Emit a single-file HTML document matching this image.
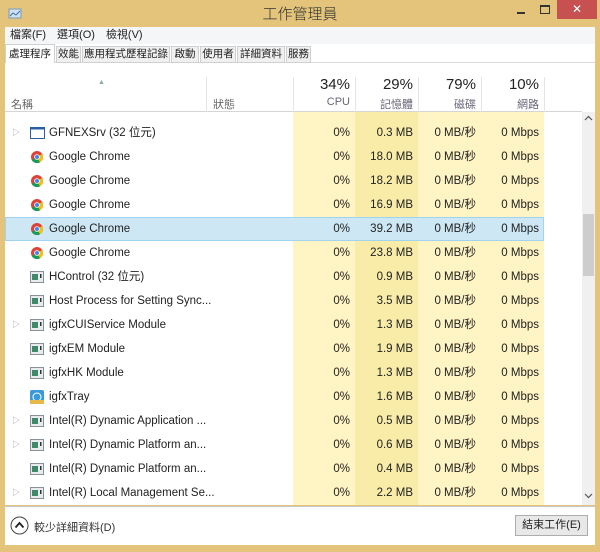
<!DOCTYPE html>
<html><head><meta charset="utf-8"><style>
*{margin:0;padding:0;box-sizing:border-box}
body{width:600px;height:552px;background:#e3c47a;font-family:"Liberation Sans","Noto Sans CJK TC",sans-serif;font-size:11.5px;color:#222;position:relative;overflow:hidden}
.abs{position:absolute}
.title{left:0;top:3px;width:600px;text-align:center;font-size:15px;color:#333;font-family:"Noto Sans CJK TC",sans-serif;font-weight:300}
.menu{left:5px;top:27px;width:590px;height:17px;background:#f5f6f7;font-size:11px}
.menu span{margin-left:5px;margin-right:6px;line-height:16px}
.tabs{left:5px;top:44px;width:590px;height:19px;background:#fff;border-bottom:1px solid #d9d9d9}
.tab{position:absolute;top:2px;height:17px;background:#f0f0f0;border:1px solid #d0d0d0;font-size:10.5px;line-height:15px;text-align:center;color:#222;white-space:nowrap;overflow:hidden}
.content{left:5px;top:63px;width:590px;height:442px;background:#fff}
.col{position:absolute;top:112px;height:393px}
.hdr{position:absolute;top:63px;height:49px;border-bottom:1px solid #d5d5d5}
.row{position:absolute;left:5px;width:577px;height:24px;line-height:24px}
.row span{position:absolute;white-space:nowrap}
.r{text-align:right}
.footer{left:5px;top:506px;width:590px;height:39px;background:#fff;border-top:1px solid #c8c8c8}
</style></head><body>
<svg class="abs" style="left:8px;top:8px" width="14" height="12"><rect x="1" y="1" width="12" height="9" fill="#cfe0ef" stroke="#7a9abf"/><polyline points="2,8 5,5 8,7 12,3" fill="none" stroke="#3a6fb0"/></svg>
<div class="abs title">工作管理員</div>
<div class="abs" style="left:517px;top:12px;width:8px;height:2px;background:#333"></div>
<div class="abs" style="left:540px;top:5px;width:10px;height:9px;border:1.5px solid #333;border-top-width:2px"></div>
<div class="abs" style="left:557px;top:0;width:40px;height:19px;background:#c75050;color:#fff;text-align:center;font-size:12px;line-height:18px">✕</div>
<div class="abs menu"><span>檔案(F)</span><span>選項(O)</span><span>檢視(V)</span></div>
<div class="abs tabs">
<div class="tab" style="left:0;width:50px;background:#fff;border-bottom:none;top:0;height:20px;line-height:18px">處理程序</div>
<div class="tab" style="left:51px;width:25px">效能</div>
<div class="tab" style="left:77px;width:88px">應用程式歷程記錄</div>
<div class="tab" style="left:166px;width:28px">啟動</div>
<div class="tab" style="left:195px;width:36px">使用者</div>
<div class="tab" style="left:232px;width:48px">詳細資料</div>
<div class="tab" style="left:281px;width:25px">服務</div>
</div>
<div class="abs content"></div>
<div class="hdr" style="left:5px;width:577px"></div>
<div class="abs" style="left:98px;top:79px;font-size:7px;color:#8aa">▲</div>
<div class="abs" style="left:11px;top:96px;color:#666;font-size:11px">名稱</div>
<div class="abs" style="left:206px;top:77px;width:1px;height:35px;background:#e5e5e5"></div>
<div class="abs" style="left:213px;top:96px;color:#666;font-size:11px">狀態</div>
<div class="abs" style="left:293px;top:77px;width:1px;height:35px;background:#e5e5e5"></div>
<div class="abs" style="left:355px;top:77px;width:1px;height:35px;background:#e5e5e5"></div>
<div class="abs" style="left:418px;top:77px;width:1px;height:35px;background:#e5e5e5"></div>
<div class="abs" style="left:481px;top:77px;width:1px;height:35px;background:#e5e5e5"></div>
<div class="abs" style="left:544px;top:77px;width:1px;height:35px;background:#e5e5e5"></div>
<div class="abs r" style="left:293px;width:57px;top:76px;font-size:15px">34%</div>
<div class="abs r" style="left:355px;width:58px;top:76px;font-size:15px">29%</div>
<div class="abs r" style="left:418px;width:58px;top:76px;font-size:15px">79%</div>
<div class="abs r" style="left:481px;width:58px;top:76px;font-size:15px">10%</div>
<div class="abs r" style="left:293px;width:57px;top:96px;font-size:11px;color:#667">CPU</div>
<div class="abs r" style="left:355px;width:58px;top:96px;font-size:11px;color:#667">記憶體</div>
<div class="abs r" style="left:418px;width:58px;top:96px;font-size:11px;color:#667">磁碟</div>
<div class="abs r" style="left:481px;width:58px;top:96px;font-size:11px;color:#667">網路</div>
<div class="col" style="left:293px;width:62px;background:#fff4c4"></div>
<div class="col" style="left:355px;width:63px;background:#f9eca8"></div>
<div class="col" style="left:418px;width:126px;background:#fff4c4"></div>
<div class="abs" style="left:582px;top:112px;width:13px;height:393px;background:#f0f0f0"></div>
<div class="abs" style="left:583px;top:214px;width:11px;height:62px;background:#cdcdcd"></div>
<svg class="abs" style="left:584px;top:115px" width="9" height="6"><polyline points="1,5 4.5,1.5 8,5" fill="none" stroke="#555" stroke-width="1.2"/></svg>
<svg class="abs" style="left:584px;top:493px" width="9" height="6"><polyline points="1,1 4.5,4.5 8,1" fill="none" stroke="#555" stroke-width="1.2"/></svg>
<div class="abs" style="left:5px;top:217px;width:539px;height:24px;background:#cde8f4;border:1px solid #9fd3ef"></div>
<div id="rows"></div>
<div class="abs footer"></div>
<svg class="abs" style="left:10px;top:516px" width="19" height="19"><circle cx="9.5" cy="9.5" r="8.5" fill="#fff" stroke="#444"/><polyline points="5.5,11.5 9.5,7 13.5,11.5" fill="none" stroke="#222" stroke-width="1.8"/></svg>
<div class="abs" style="left:34px;top:519px;font-size:11px;color:#333">較少詳細資料(D)</div>
<div class="abs" style="left:515px;top:515px;width:73px;height:21px;background:#e8e8e8;border:1px solid #adadad;font-size:11px;text-align:center;line-height:19px">結束工作(E)</div>
<script>
var d=[["GFNEXSrv (32 位元)","w",1,"0.3"],["Google Chrome","c",0,"18.0"],["Google Chrome","c",0,"18.2"],["Google Chrome","c",0,"16.9"],["Google Chrome","c",0,"39.2"],["Google Chrome","c",0,"23.8"],["HControl (32 位元)","s",0,"0.9"],["Host Process for Setting Sync...","s",0,"3.5"],["igfxCUIService Module","s",1,"1.3"],["igfxEM Module","s",0,"1.9"],["igfxHK Module","s",0,"1.3"],["igfxTray","t",0,"1.6"],["Intel(R) Dynamic Application ...","s",1,"0.5"],["Intel(R) Dynamic Platform an...","s",1,"0.6"],["Intel(R) Dynamic Platform an...","s",0,"0.4"],["Intel(R) Local Management Se...","s",1,"2.2"]];
var h="";
d.forEach(function(r,i){var y=121+i*24;
var ic="";
if(r[1]=="c")ic='<svg style="position:absolute;left:26px;top:6px" width="12" height="12" viewBox="0 0 12 12"><circle cx="6" cy="6" r="6" fill="#db4437"/><path d="M6 6 L0.8 9 A6 6 0 0 0 9 11.2Z" fill="#0f9d58"/><path d="M6 6 L9 11.2 A6 6 0 0 0 11.2 3Z" fill="#f4c20d"/><circle cx="6" cy="6" r="2.8" fill="#fff"/><circle cx="6" cy="6" r="2" fill="#4285f4"/></svg>';
else if(r[1]=="w")ic='<svg style="position:absolute;left:25px;top:6px" width="15" height="12"><rect x="0.5" y="0.5" width="14" height="11" fill="#fff" stroke="#2a5fa8"/><rect x="0.5" y="0.5" width="14" height="2" fill="#2a5fa8"/></svg>';
else if(r[1]=="t")ic='<svg style="position:absolute;left:25px;top:5px" width="14" height="14"><rect x="0" y="0" width="14" height="14" rx="2" fill="#3a9ad9"/><circle cx="7" cy="7" r="4" fill="none" stroke="#fff"/><rect x="0" y="10" width="14" height="4" fill="#e8b84a"/></svg>';
else ic='<svg style="position:absolute;left:25px;top:6px" width="14" height="12"><rect x="0.5" y="0.5" width="13" height="11" fill="#e8ecef" stroke="#8a9299"/><rect x="2" y="3" width="6" height="6" fill="#3f8a6a"/><rect x="10" y="3" width="1.5" height="4" fill="#333"/></svg>';
h+='<div class="row" style="top:'+y+'px">'+(r[2]?'<span style="left:7px;color:#999;font-size:8px">▷</span>':'')+ic+
'<span style="left:44px">'+r[0]+'</span><span class="r" style="left:288px;width:57px">0%</span><span class="r" style="left:350px;width:58px">'+r[3]+' MB</span><span class="r" style="left:413px;width:58px">0 MB/秒</span><span class="r" style="left:476px;width:58px">0 Mbps</span></div>';});
document.getElementById("rows").innerHTML=h;
</script>
</body></html>
